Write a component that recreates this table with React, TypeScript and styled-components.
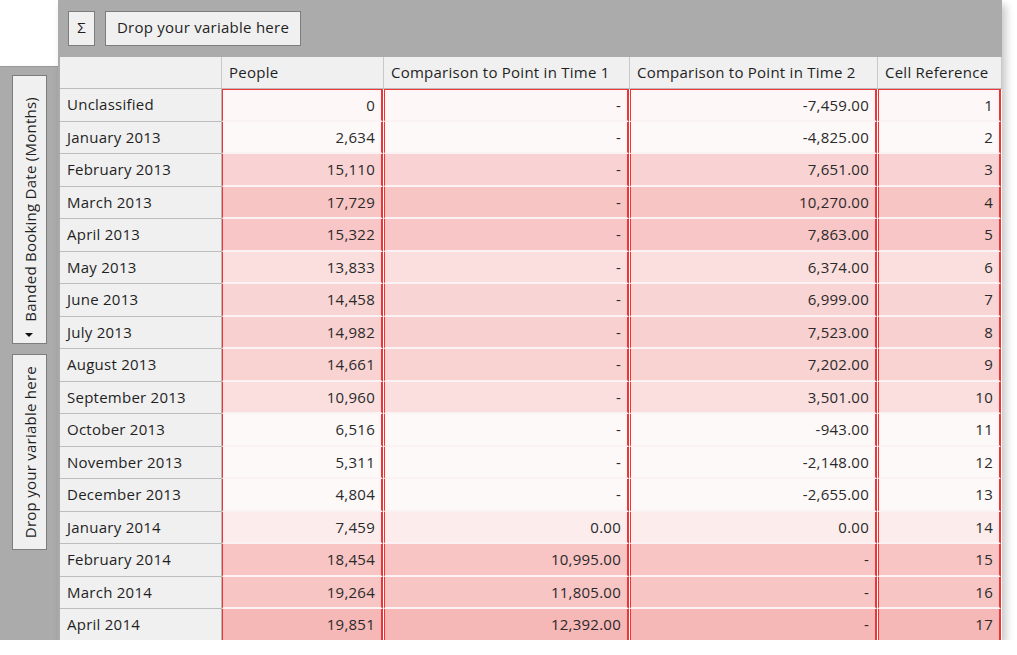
import styled, { createGlobalStyle } from 'styled-components';

const GlobalStyle = createGlobalStyle`
    html, body {
        margin: 0;
        padding: 0;
        background: #ffffff;
    }

    body {
        font-family: 'Open Sans', 'Noto Sans', sans-serif;
        font-size: 15px;
        letter-spacing: 0.25px;
        color: #1f1f1f;
    }
`;

interface Row {
    label: string;
    people: string;
    first: string;
    second: string;
    ref: number;
    tint: string;
}

const rows: Row[] = [
    { label: 'Unclassified', people: '0', first: '-', second: '-7,459.00', ref: 1, tint: '#fdf7f7' },
    { label: 'January 2013', people: '2,634', first: '-', second: '-4,825.00', ref: 2, tint: '#fef9f9' },
    { label: 'February 2013', people: '15,110', first: '-', second: '7,651.00', ref: 3, tint: '#f9d3d3' },
    { label: 'March 2013', people: '17,729', first: '-', second: '10,270.00', ref: 4, tint: '#f8c5c5' },
    { label: 'April 2013', people: '15,322', first: '-', second: '7,863.00', ref: 5, tint: '#f8c6c6' },
    { label: 'May 2013', people: '13,833', first: '-', second: '6,374.00', ref: 6, tint: '#fbdfdf' },
    { label: 'June 2013', people: '14,458', first: '-', second: '6,999.00', ref: 7, tint: '#f9d4d4' },
    { label: 'July 2013', people: '14,982', first: '-', second: '7,523.00', ref: 8, tint: '#f8d0d0' },
    { label: 'August 2013', people: '14,661', first: '-', second: '7,202.00', ref: 9, tint: '#f9d2d2' },
    { label: 'September 2013', people: '10,960', first: '-', second: '3,501.00', ref: 10, tint: '#fbdfdf' },
    { label: 'October 2013', people: '6,516', first: '-', second: '-943.00', ref: 11, tint: '#fef9f9' },
    { label: 'November 2013', people: '5,311', first: '-', second: '-2,148.00', ref: 12, tint: '#fef9f9' },
    { label: 'December 2013', people: '4,804', first: '-', second: '-2,655.00', ref: 13, tint: '#fef9f9' },
    { label: 'January 2014', people: '7,459', first: '0.00', second: '0.00', ref: 14, tint: '#fcecec' },
    { label: 'February 2014', people: '18,454', first: '10,995.00', second: '-', ref: 15, tint: '#f8c4c4' },
    { label: 'March 2014', people: '19,264', first: '11,805.00', second: '-', ref: 16, tint: '#f8c5c5' },
    { label: 'April 2014', people: '19,851', first: '12,392.00', second: '-', ref: 17, tint: '#f6b7b7' },
];

const columns = ['People', 'Comparison to Point in Time 1', 'Comparison to Point in Time 2', 'Cell Reference'];

const GRID = '162px 162px 246px 248px 124px';

export default function App() {
    return (
        <>
            <GlobalStyle />
            <Frame>
                <SidePanel>
                    <VerticalButton $height={269}>
                        <VerticalLabel>Banded Booking Date (Months)</VerticalLabel>
                        <Caret />
                    </VerticalButton>
                    <VerticalButton $height={196}>
                        <VerticalLabel>Drop your variable here</VerticalLabel>
                    </VerticalButton>
                </SidePanel>
                <Main>
                    <Toolbar>
                        <ToolButton $wide={false}>Σ</ToolButton>
                        <ToolButton $wide>Drop your variable here</ToolButton>
                    </Toolbar>
                    <Table>
                        <HeaderRow>
                            <HeaderCell />
                            {columns.map((c) => (
                                <HeaderCell key={c}>{c}</HeaderCell>
                            ))}
                        </HeaderRow>
                        {rows.map((r, i) => (
                            <DataRow key={r.label}>
                                <RowLabel>{r.label}</RowLabel>
                                <ValueCell $tint={r.tint} $first={i === 0}>{r.people}</ValueCell>
                                <ValueCell $tint={r.tint} $first={i === 0}>{r.first}</ValueCell>
                                <ValueCell $tint={r.tint} $first={i === 0}>{r.second}</ValueCell>
                                <ValueCell $tint={r.tint} $first={i === 0}>{r.ref}</ValueCell>
                            </DataRow>
                        ))}
                    </Table>
                </Main>
            </Frame>
        </>
    );
}

const Frame = styled.div`
    display: flex;
    align-items: flex-start;
    width: 1002px;
    height: 640px;
`;

const SidePanel = styled.div`
    display: flex;
    flex-direction: column;
    align-items: center;
    gap: 10px;
    width: 58px;
    height: 574px;
    margin-top: 66px;
    padding-top: 8px;
    box-sizing: border-box;
    background: #ababab;
    border-top: 1px solid #9a9a9a;
    box-shadow: 2px 4px 6px rgba(0, 0, 0, 0.2);
`;

const VerticalButton = styled.div<{ $height: number }>`
    position: relative;
    display: flex;
    justify-content: center;
    align-items: center;
    width: 35px;
    height: ${({ $height }) => $height}px;
    box-sizing: border-box;
    background: #f0f0f0;
    border: 1px solid #7d7d7d;
`;

const VerticalLabel = styled.span`
    writing-mode: vertical-rl;
    transform: rotate(180deg);
    white-space: nowrap;
    margin-left: 2px;
    color: #1f1f1f;
`;

const Caret = styled.span`
    position: absolute;
    bottom: 6px;
    left: 50%;
    margin-left: -4px;
    border-left: 4px solid transparent;
    border-right: 4px solid transparent;
    border-top: 4px solid #111;
`;

const Main = styled.div`
    display: flex;
    flex-direction: column;
    width: 944px;
    height: 640px;
    padding-left: 2px;
    box-sizing: border-box;
    background: #ababab;
    overflow: hidden;
    box-shadow: 4px 5px 8px rgba(0, 0, 0, 0.22);
`;

const Toolbar = styled.div`
    display: flex;
    align-items: center;
    gap: 10px;
    height: 57px;
    flex-shrink: 0;
    padding-left: 8px;
    box-sizing: border-box;
`;

const ToolButton = styled.div<{ $wide: boolean }>`
    display: flex;
    align-items: center;
    justify-content: center;
    height: 35px;
    width: ${({ $wide }) => ($wide ? '196px' : '27px')};
    padding-bottom: 3px;
    box-sizing: border-box;
    background: #f0f0f0;
    border: 1px solid #7d7d7d;
    white-space: nowrap;
    color: #1f1f1f;
`;

const Table = styled.div`
    display: flex;
    flex-direction: column;
    background: #ffffff;
`;

const HeaderRow = styled.div`
    display: grid;
    grid-template-columns: ${GRID};
    height: 32px;
    box-sizing: border-box;
    background: #f0f0f0;
    border-bottom: 1px solid #bcbcbc;
`;

const HeaderCell = styled.div`
    display: flex;
    align-items: center;
    padding-left: 7px;
    padding-bottom: 2px;
    border-right: 1px solid #c9c9c9;
    white-space: nowrap;
    overflow: hidden;
    color: #1f1f1f;
`;

const DataRow = styled.div`
    display: grid;
    grid-template-columns: ${GRID};
    height: 32.5px;
`;

const RowLabel = styled.div`
    display: flex;
    align-items: center;
    padding-left: 7px;
    padding-bottom: 1px;
    background: #f0f0f0;
    border-bottom: 1px solid #bdbdbd;
    border-right: 1px solid #b8b8b8;
    white-space: nowrap;
    color: #1f1f1f;
`;

const ValueCell = styled.div<{ $tint: string; $first: boolean }>`
    display: flex;
    align-items: center;
    justify-content: flex-end;
    padding-right: 6px;
    margin-right: 1px;
    background: ${({ $tint }) => $tint};
    border-left: 1px solid #ee3434;
    border-right: 2px solid #ee3434;
    border-top: ${({ $first }) => ($first ? '1px solid #ee3434' : 'none')};
    border-bottom: 2px solid #fbf3f3;
    color: #2a2a2a;
`;
